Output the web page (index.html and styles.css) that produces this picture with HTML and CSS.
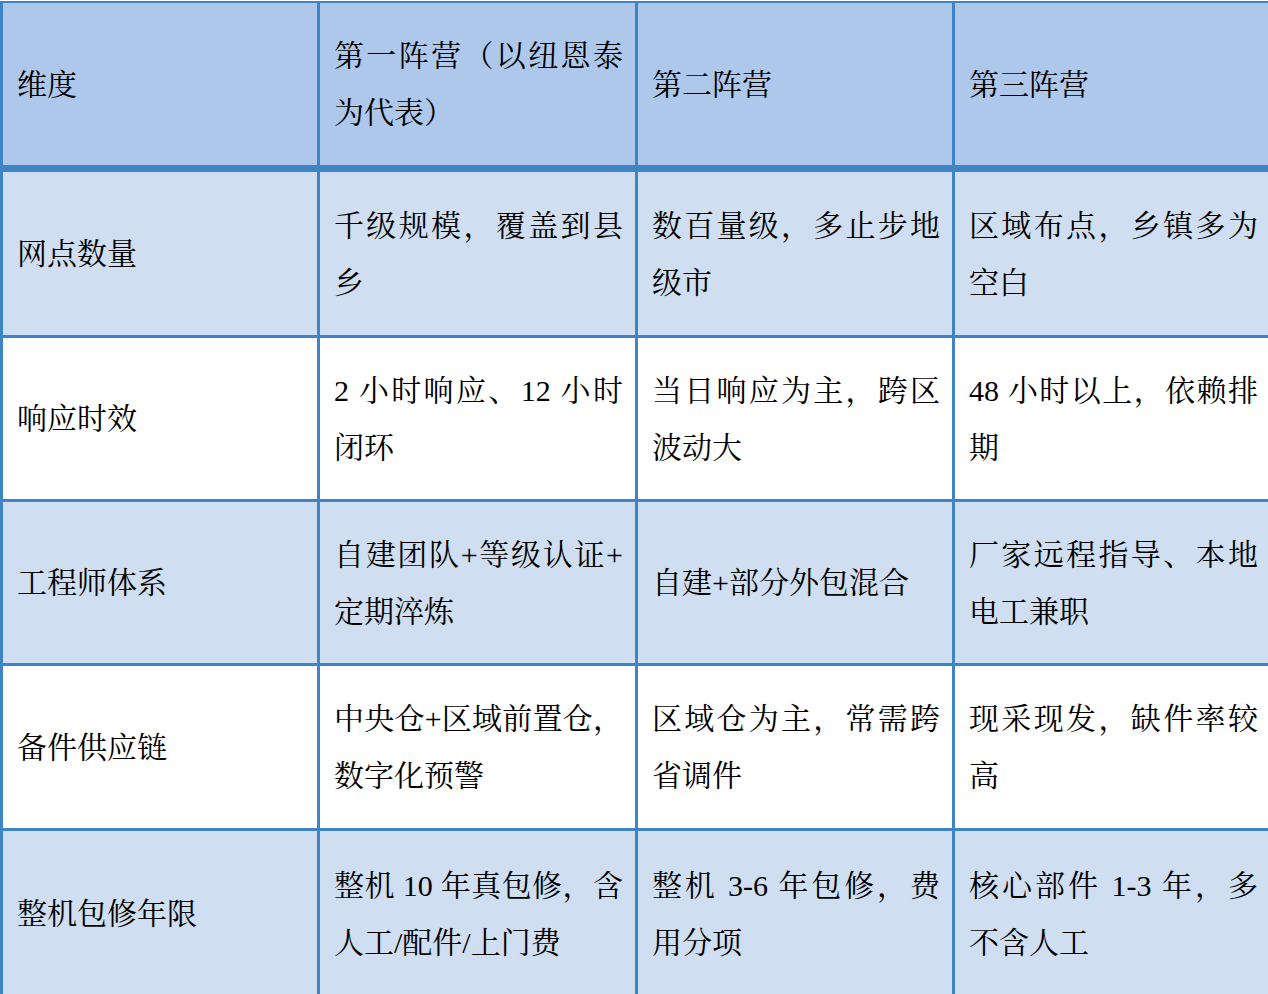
FILE: index.html
```html
<!DOCTYPE html>
<html lang="zh-CN">
<head>
<meta charset="utf-8">
<title>阵营对比</title>
<link rel="stylesheet" href="styles.css">
</head>
<body>
<div class="table">
  <div class="cell head"><p>维度</p></div>
  <div class="cell head"><p>第一阵营（以纽恩泰为代表）</p></div>
  <div class="cell head"><p>第二阵营</p></div>
  <div class="cell head"><p>第三阵营</p></div>

  <div class="cell alt"><p>网点数量</p></div>
  <div class="cell alt"><p>千级规模，覆盖到县乡</p></div>
  <div class="cell alt"><p>数百量级，多止步地级市</p></div>
  <div class="cell alt"><p>区域布点，乡镇多为空白</p></div>

  <div class="cell"><p>响应时效</p></div>
  <div class="cell"><p>2 小时响应、12 小时闭环</p></div>
  <div class="cell"><p>当日响应为主，跨区波动大</p></div>
  <div class="cell"><p>48 小时以上，依赖排期</p></div>

  <div class="cell alt"><p>工程师体系</p></div>
  <div class="cell alt"><p>自建团队+<wbr>等级认证+<wbr>定期淬炼</p></div>
  <div class="cell alt"><p>自建+部分外包混合</p></div>
  <div class="cell alt"><p>厂家远程指导、本地电工兼职</p></div>

  <div class="cell"><p>备件供应链</p></div>
  <div class="cell"><p>中央仓+<wbr>区域前置仓，数字化预警</p></div>
  <div class="cell"><p>区域仓为主，常需跨省调件</p></div>
  <div class="cell"><p>现采现发，缺件率较高</p></div>

  <div class="cell alt"><p>整机包修年限</p></div>
  <div class="cell alt"><p>整机 10 年真包修，含人工/配件/上门费</p></div>
  <div class="cell alt"><p>整机 3-6 年包修，费用分项</p></div>
  <div class="cell alt"><p>核心部件 1-3 年，多不含人工</p></div>
</div>
</body>
</html>
```
FILE: styles.css
```css
html, body {
  margin: 0;
  padding: 0;
  overflow: hidden;
  background: #ffffff;
}

.table {
  margin-top: 1px;
  width: 1270px;
  box-sizing: border-box;
  padding: 2px 0 0 3px;
  display: grid;
  grid-template-columns: 314px 315px 314px 315px;
  grid-template-rows: 166px 163px 161px 161px 162px 165px;
  gap: 3px;
  background: #3f84c4;
  font-family: "Liberation Serif", "Noto Serif CJK SC", "Noto Sans CJK SC", serif;
  font-size: 30px;
  line-height: 57px;
  color: #000000;
}

.cell {
  background: #ffffff;
  display: flex;
  align-items: center;
  padding: 0 12px 0 14px;
  box-sizing: border-box;
}

.cell p {
  margin: 0;
  width: 100%;
  text-align: justify;
}

.alt {
  background: #cfdef0;
}

.head {
  background: #aec8ec;
  border-bottom: 4px solid #3f84c4;
}
```
